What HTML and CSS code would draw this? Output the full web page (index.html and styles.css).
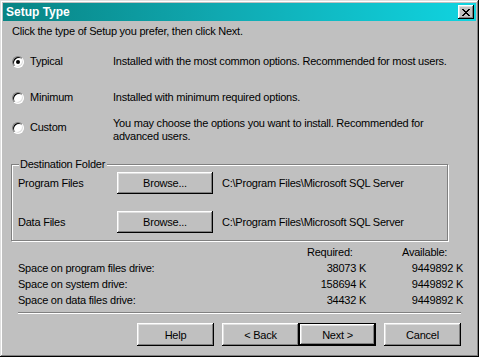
FILE: index.html
```html
<!DOCTYPE html>
<html lang="en">
<head>
    <meta charset="UTF-8">
    <title>Setup Type</title>
    <link rel="stylesheet" href="styles.css">
</head>
<body>
    <div class="window">
        <!-- Title bar -->
        <div class="titlebar">
            <span class="title">Setup Type</span>
            <span class="close-btn">
                <svg width="8" height="7" viewBox="0 0 8 7">
                    <path d="M0 0h2v1H0zM6 0h2v1H6zM1 1h2v1H1zM5 1h2v1H5zM2 2h4v1H2zM3 3h2v1H3zM2 4h4v1H2zM1 5h2v1H1zM5 5h2v1H5zM0 6h2v1H0zM6 6h2v1H6z" fill="#000"/>
                </svg>
            </span>
        </div>

        <div class="content">
            <p class="intro">Click the type of Setup you prefer, then click Next.</p>

            <!-- Setup options -->
            <div class="option option-typical">
                <div class="option-label"><span class="radio checked"></span>Typical</div>
                <div class="option-desc">Installed with the most common options. Recommended for most users.</div>
            </div>
            <div class="option option-minimum">
                <div class="option-label"><span class="radio"></span>Minimum</div>
                <div class="option-desc">Installed with minimum required options.</div>
            </div>
            <div class="option option-custom">
                <div class="option-label"><span class="radio"></span>Custom</div>
                <div class="option-desc">You may choose the options you want to install. Recommended for<br>advanced users.</div>
            </div>

            <!-- Destination folder -->
            <div class="group">
                <div class="legend">Destination Folder</div>
                <div class="folder-row">
                    <span class="folder-label">Program Files</span>
                    <button class="btn browse">Browse...</button>
                    <span class="folder-path">C:\Program Files\Microsoft SQL Server</span>
                </div>
                <div class="folder-row second">
                    <span class="folder-label">Data Files</span>
                    <button class="btn browse">Browse...</button>
                    <span class="folder-path">C:\Program Files\Microsoft SQL Server</span>
                </div>
            </div>

            <!-- Disk space -->
            <div class="space">
                <span></span>
                <span class="head-req">Required:</span>
                <span class="head-avail">Available:</span>

                <span class="space-label">Space on program files drive:</span>
                <span class="num">38073 K</span>
                <span class="num">9449892 K</span>

                <span class="space-label">Space on system drive:</span>
                <span class="num">158694 K</span>
                <span class="num">9449892 K</span>

                <span class="space-label">Space on data files drive:</span>
                <span class="num">34432 K</span>
                <span class="num">9449892 K</span>
            </div>

            <div class="separator"></div>

            <div class="buttons">
                <button class="btn">Help</button>
                <button class="btn back">&lt; Back</button>
                <button class="btn default">Next &gt;</button>
                <button class="btn cancel">Cancel</button>
            </div>
        </div>
    </div>
</body>
</html>
```

FILE: styles.css
```css
body {
    margin: 0;
    padding: 0;
    background: #c0c0c0;
    font-family: "Liberation Sans", Arial, sans-serif;
    font-size: 11px;
    letter-spacing: -0.23px;
    color: #000;
}

.window {
    width: 479px;
    height: 357px;
    box-sizing: border-box;
    padding: 3px;
    background: #c0c0c0;
    box-shadow: inset -1px -1px #000, inset 1px 1px #dfdfdf,
                inset -2px -2px #808080, inset 2px 2px #fff;
    overflow: hidden;
}

.titlebar {
    height: 18px;
    display: flex;
    align-items: center;
    justify-content: space-between;
    padding: 0 2px 0 3px;
    background: linear-gradient(90deg, #088484 0%, #10a8b0 45%, #10d4e0 100%);
    color: #fff;
}

.title {
    font-weight: bold;
    font-size: 12px;
    letter-spacing: 0;
}

.close-btn {
    width: 16px;
    height: 14px;
    box-sizing: border-box;
    display: flex;
    align-items: center;
    justify-content: center;
    padding-right: 1px;
    background: #c0c0c0;
    box-shadow: inset -1px -1px #000, inset 1px 1px #fff,
                inset -2px -2px #808080, inset 2px 2px #dfdfdf;
}

.content {
    padding-left: 8px;
    line-height: 13px;
}

.intro {
    margin: 4px 0 0 1px;
}

.option {
    display: flex;
    margin-left: 1px;
}

.option-typical {
    margin-top: 17px;
    align-items: center;
}

.option-minimum {
    margin-top: 23px;
    align-items: center;
}

.option-custom {
    margin-top: 13px;
    align-items: flex-start;
}

.option-custom .option-label {
    margin-top: 4px;
}

.option-label {
    width: 101px;
    display: flex;
    align-items: center;
}

.radio {
    width: 12px;
    height: 12px;
    box-sizing: border-box;
    margin-right: 6px;
    border-radius: 50%;
    border: 1px solid;
    border-color: #808080 #fff #fff #808080;
    background: #fff;
    box-shadow: inset 1px 1px #000, inset -1px -1px #dfdfdf;
    display: flex;
    align-items: center;
    justify-content: center;
}

.radio.checked::after {
    content: "";
    width: 4px;
    height: 4px;
    border-radius: 50%;
    background: #000;
}

.group {
    width: 437px;
    box-sizing: border-box;
    margin-top: 21px;
    padding: 0 0 7px 6px;
    border: 1px solid #808080;
    box-shadow: inset 1px 1px #fff, 1px 1px #fff;
}

.legend {
    width: max-content;
    height: 13px;
    margin: -7px 0 -6px 1px;
    padding: 0 2px 0 1px;
    background: #c0c0c0;
}

.folder-row {
    display: flex;
    align-items: center;
    height: 22px;
    margin-top: 7px;
}

.folder-row.second {
    margin-top: 17px;
}

.folder-label {
    width: 99px;
}

.folder-path {
    margin-left: 9px;
}

.btn {
    width: 77px;
    height: 23px;
    padding: 0;
    border: none;
    background: #c0c0c0;
    font-family: "Liberation Sans", Arial, sans-serif;
    font-size: 11px;
    letter-spacing: -0.23px;
    color: #000;
    box-shadow: inset -1px -1px #000, inset 1px 1px #fff,
                inset -2px -2px #808080, inset 2px 2px #dfdfdf;
}

.btn.browse {
    width: 96px;
    height: 22px;
}

.btn.default {
    border: 1px solid #000;
}

.btn.back {
    margin-left: 8px;
}

.btn.cancel {
    margin-left: 8px;
}

.space {
    display: grid;
    grid-template-columns: 289px 59px 97px;
    margin: 4px 0 0 7px;
    line-height: 16px;
}

.space .head-req,
.space .head-avail {
    line-height: 15px;
}

.head-avail {
    padding-left: 36px;
}

.num {
    text-align: right;
}

.separator {
    width: 443px;
    height: 1px;
    margin: 4px 0 0 7px;
    background: #808080;
    border-bottom: 1px solid #fff;
}

.buttons {
    display: flex;
    justify-content: flex-end;
    width: 450px;
    margin-top: 9px;
}
```
